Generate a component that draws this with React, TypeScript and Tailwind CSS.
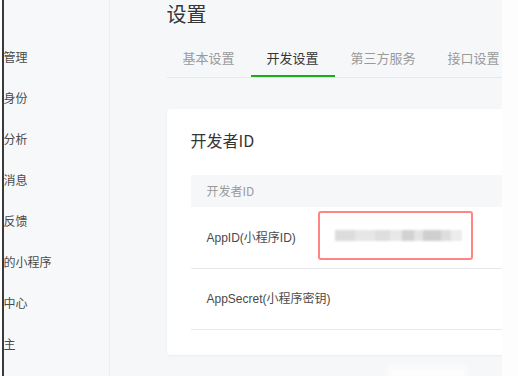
import React from "react";

const menu = ["管理", "身份", "分析", "消息", "反馈", "的小程序", "中心", "主"];
const tabs = ["基本设置", "开发设置", "第三方服务", "接口设置"];

export default function App() {
  return (
    <div
      className="flex w-[518px] h-[376px] overflow-hidden bg-white"
      style={{ fontFamily: '"Noto Sans CJK SC", "Noto Sans", sans-serif' }}
    >
      <div className="w-[2px] shrink-0 bg-white" />
      <div className="w-[1.5px] shrink-0 bg-[#3a3a3a]" />
      {/* sidebar */}
      <div className="w-[106px] shrink-0 bg-[#f7f8fa] border-r border-[#eceef1] overflow-hidden">
        <div className="flex flex-col pt-[47px] gap-[21px]">
          {menu.map((m) => (
            <div key={m} className="h-[20px] leading-[20px] text-[12px] text-[#4a4a4a] whitespace-nowrap">
              {m}
            </div>
          ))}
        </div>
      </div>
      {/* main */}
      <div className="w-[392px] shrink-0 bg-[#f6f7f9] overflow-hidden">
        <div className="pl-[57px] w-[420px]">
          <div className="pt-[1px] h-[28px] leading-[26px] text-[20px] text-[#353535]">设置</div>
          <div className="mt-[20px] flex border-b border-[#e7e8eb]">
            {tabs.map((t, i) => (
              <div
                key={t}
                className={
                  i === 1
                    ? "px-4 h-[29px] leading-[20px] text-[13px] text-[#353535] border-b-2 border-[#1aad19] mb-[-1px]"
                    : "px-4 h-[29px] leading-[20px] text-[13px] text-[#9a9a9a]"
                }
              >
                {t}
              </div>
            ))}
          </div>
          <div className="mt-[31px] h-[246px] bg-white rounded-[4px] shadow-[0_1px_3px_rgba(0,0,0,0.05)] pl-6">
            <div className="pt-[20px] h-[66px] leading-[22px] text-[16px] text-[#353535]">开发者ID</div>
            <div className="h-[32px] bg-[#f6f7f9] pl-4 flex items-center text-[12px] text-[#9a9a9a]">开发者ID</div>
            <div className="h-[62px] flex items-center border-b border-[#e7e8eb]">
              <div
                className="w-[127px] pl-4 text-[12px] text-[#4a4a4a] whitespace-nowrap"
                style={{ fontFamily: '"Liberation Sans", "Noto Sans CJK SC", sans-serif' }}
              >
                AppID(小程序ID)
              </div>
              <div className="w-[155px] h-[49px] -mt-[4px] border-2 border-[#ff8585] rounded-[3px] flex items-center pl-[15px]">
                <div className="flex h-[11px] w-[127px] blur-[1px]">
                  <div className="w-[20px] bg-[#dcdcdc]" />
                  <div className="w-[20px] bg-[#e6e6e6]" />
                  <div className="w-[15px] bg-[#dedede]" />
                  <div className="w-[12px] bg-[#e8e8e8]" />
                  <div className="w-[12px] bg-[#d2d2d2]" />
                  <div className="w-[9px] bg-[#e4e4e4]" />
                  <div className="w-[18px] bg-[#cfcfcf]" />
                  <div className="w-[10px] bg-[#dedede]" />
                  <div className="w-[11px] bg-[#ececec]" />
                </div>
              </div>
            </div>
            <div className="h-[61px] flex items-center border-b border-[#e7e8eb]">
              <div
                className="pl-4 text-[12px] text-[#4a4a4a] whitespace-nowrap"
                style={{ fontFamily: '"Liberation Sans", "Noto Sans CJK SC", sans-serif' }}
              >
                AppSecret(小程序密钥)
              </div>
            </div>
          </div>
          <div className="mt-[11px] ml-[220px] w-[80px] h-[14px] bg-white/70 blur-[3px]" />
        </div>
      </div>
      <div className="flex-1 bg-[#fdfdfd]" />
    </div>
  );
}
